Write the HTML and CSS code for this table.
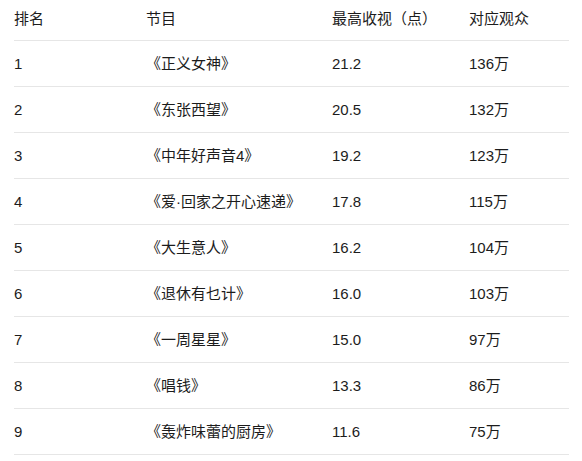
FILE: index.html
```html
<!DOCTYPE html>
<html lang="zh-CN">
<head>
<meta charset="utf-8">
<title>收视排名</title>
<link rel="stylesheet" href="styles.css">
</head>
<body>
<div class="wrap">
<table class="rank">
  <colgroup>
    <col class="c-rank"><col class="c-show"><col class="c-rate"><col class="c-aud">
  </colgroup>
  <thead>
    <tr><th>排名</th><th>节目</th><th>最高收视（点）</th><th>对应观众</th></tr>
  </thead>
  <tbody>
    <tr><td>1</td><td>《正义女神》</td><td>21.2</td><td>136万</td></tr>
    <tr><td>2</td><td>《东张西望》</td><td>20.5</td><td>132万</td></tr>
    <tr><td>3</td><td>《中年好声音4》</td><td>19.2</td><td>123万</td></tr>
    <tr><td>4</td><td>《爱·回家之开心速递》</td><td>17.8</td><td>115万</td></tr>
    <tr><td>5</td><td>《大生意人》</td><td>16.2</td><td>104万</td></tr>
    <tr><td>6</td><td>《退休有乜计》</td><td>16.0</td><td>103万</td></tr>
    <tr><td>7</td><td>《一周星星》</td><td>15.0</td><td>97万</td></tr>
    <tr><td>8</td><td>《唱钱》</td><td>13.3</td><td>86万</td></tr>
    <tr><td>9</td><td>《轰炸味蕾的厨房》</td><td>11.6</td><td>75万</td></tr>
  </tbody>
</table>
</div>
</body>
</html>
```
FILE: styles.css
```css
html, body {
  margin: 0;
  padding: 0;
  background: #fff;
}
.wrap {
  padding: 0 13px 0 14px;
}
.rank {
  width: 555px;
  border-collapse: collapse;
  table-layout: fixed;
  font-family: "Liberation Sans", "Noto Sans CJK SC", sans-serif;
  font-size: 15px;
  color: #1c1c1c;
}
.c-rank { width: 132px; }
.c-show { width: 186px; }
.c-rate { width: 137px; }
.c-aud { width: 100px; }
.rank th {
  font-weight: normal;
  text-align: left;
  padding: 8px 0 10px 0;
  line-height: 22px;
  border-bottom: 1px solid #e6e6e6;
}
.rank td {
  text-align: left;
  padding: 0;
  height: 45px;
  line-height: 22px;
  vertical-align: middle;
  border-bottom: 1px solid #e6e6e6;
}
```
